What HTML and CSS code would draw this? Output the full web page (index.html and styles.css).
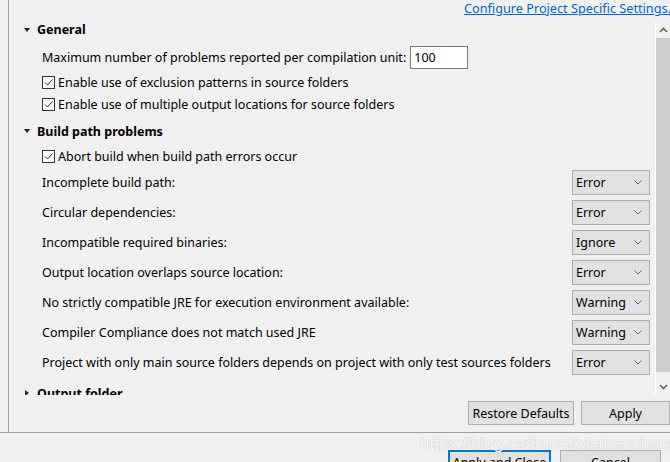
FILE: index.html
```html
<!DOCTYPE html>
<html>
<head>
<meta charset="utf-8">
<link rel="stylesheet" href="styles.css">
</head>
<body>
<div class="frame">
  <div class="panel">
    <div class="linkbar"><a class="link" href="#">Configure Project Specific Settings...</a></div>
    <div class="scrollwrap">
      <div class="content">
        <div class="section-head"><span class="tri down"></span><span>General</span></div>
        <div class="row row-max">
          <span>Maximum number of problems reported per compilation unit:</span>
          <span class="textbox">100</span>
        </div>
        <div class="row row-check first-check"><span class="checkbox"><svg viewBox="0 0 13 13" width="13" height="13"><path d="M3 6.5 L5.5 9 L10.5 3.5" fill="none" stroke="#222" stroke-width="1"/></svg></span><span>Enable use of exclusion patterns in source folders</span></div>
        <div class="row row-check second-check"><span class="checkbox"><svg viewBox="0 0 13 13" width="13" height="13"><path d="M3 6.5 L5.5 9 L10.5 3.5" fill="none" stroke="#222" stroke-width="1"/></svg></span><span>Enable use of multiple output locations for source folders</span></div>
        <div class="section-head build-head"><span class="tri down"></span><span>Build path problems</span></div>
        <div class="row row-check abort-check"><span class="checkbox"><svg viewBox="0 0 13 13" width="13" height="13"><path d="M3 6.5 L5.5 9 L10.5 3.5" fill="none" stroke="#222" stroke-width="1"/></svg></span><span>Abort build when build path errors occur</span></div>
        <div class="select-rows">
          <div class="row row-select"><span class="label">Incomplete build path:</span><span class="select"><span>Error</span><svg class="chev" viewBox="0 0 8 5" width="8" height="5"><path d="M0.5 0.5 L4 4 L7.5 0.5" fill="none" stroke="#666" stroke-width="1"/></svg></span></div>
          <div class="row row-select"><span class="label">Circular dependencies:</span><span class="select"><span>Error</span><svg class="chev" viewBox="0 0 8 5" width="8" height="5"><path d="M0.5 0.5 L4 4 L7.5 0.5" fill="none" stroke="#666" stroke-width="1"/></svg></span></div>
          <div class="row row-select"><span class="label">Incompatible required binaries:</span><span class="select"><span>Ignore</span><svg class="chev" viewBox="0 0 8 5" width="8" height="5"><path d="M0.5 0.5 L4 4 L7.5 0.5" fill="none" stroke="#666" stroke-width="1"/></svg></span></div>
          <div class="row row-select"><span class="label">Output location overlaps source location:</span><span class="select"><span>Error</span><svg class="chev" viewBox="0 0 8 5" width="8" height="5"><path d="M0.5 0.5 L4 4 L7.5 0.5" fill="none" stroke="#666" stroke-width="1"/></svg></span></div>
          <div class="row row-select"><span class="label">No strictly compatible JRE for execution environment available:</span><span class="select"><span>Warning</span><svg class="chev" viewBox="0 0 8 5" width="8" height="5"><path d="M0.5 0.5 L4 4 L7.5 0.5" fill="none" stroke="#666" stroke-width="1"/></svg></span></div>
          <div class="row row-select"><span class="label">Compiler Compliance does not match used JRE</span><span class="select"><span>Warning</span><svg class="chev" viewBox="0 0 8 5" width="8" height="5"><path d="M0.5 0.5 L4 4 L7.5 0.5" fill="none" stroke="#666" stroke-width="1"/></svg></span></div>
          <div class="row row-select"><span class="label">Project with only main source folders depends on project with only test sources folders</span><span class="select"><span>Error</span><svg class="chev" viewBox="0 0 8 5" width="8" height="5"><path d="M0.5 0.5 L4 4 L7.5 0.5" fill="none" stroke="#666" stroke-width="1"/></svg></span></div>
        </div>
        <div class="section-head output-head"><span class="tri right"></span><span>Output folder</span></div>
      </div>
      <div class="scrollbar">
        <div class="sb-btn"><svg viewBox="0 0 9 6" width="9" height="6"><path d="M1 5 L4.5 1.5 L8 5" fill="none" stroke="#606060" stroke-width="1.6"/></svg></div>
        <div class="thumb"></div>
        <div class="sb-btn"><svg viewBox="0 0 9 6" width="9" height="6"><path d="M1 1 L4.5 4.5 L8 1" fill="none" stroke="#606060" stroke-width="1.6"/></svg></div>
      </div>
    </div>
    <div class="actions">
      <button class="btn btn-restore">Restore Defaults</button>
      <button class="btn btn-apply">Apply</button>
    </div>
  </div>
</div>
<div class="footer">
  <button class="btn btn-close">Apply and Close</button>
  <button class="btn btn-cancel">Cancel</button>
</div>
<div class="watermark">https://blog.csdn.net/xiamaocheng</div>
</body>
</html>
```

FILE: styles.css
```css
html, body {
  margin: 0;
  padding: 0;
}
body {
  width: 670px;
  height: 462px;
  overflow: hidden;
  background: #f0f0f0;
  font-family: "Noto Sans", "Open Sans", sans-serif;
  font-size: 12.5px;
  color: #000;
  position: relative;
}
.frame {
  height: 432px;
  border-bottom: 1px solid #a0a0a0;
}
.panel {
  margin-left: 8px;
  border-left: 1px solid #a0a0a0;
  height: 432px;
  display: flex;
  flex-direction: column;
}
.linkbar {
  height: 22px;
  padding-left: 455px;
  white-space: nowrap;
  overflow: hidden;
  line-height: 16px;
}
.link {
  color: #0066cc;
  text-decoration: underline;
  font-size: 12.7px;
}
.scrollwrap {
  height: 373px;
  display: flex;
}
.content {
  flex: 1;
  overflow: hidden;
  padding-right: 5px;
}
.section-head {
  height: 15px;
  display: flex;
  align-items: center;
  padding-left: 14px;
  font-weight: bold;
  white-space: nowrap;
}
.build-head { margin-top: 9px; height: 16px; }
.output-head { margin-top: 10px; height: 16px; }
.tri {
  width: 14px;
  display: inline-flex;
  align-items: center;
}
.tri.down::before {
  content: "";
  border-left: 3.5px solid transparent;
  border-right: 3.5px solid transparent;
  border-top: 4px solid #222;
  margin-left: 1px;
}
.tri.right::before {
  content: "";
  border-top: 3.5px solid transparent;
  border-bottom: 3.5px solid transparent;
  border-left: 4px solid #222;
  margin-left: 2px;
}
.row {
  display: flex;
  align-items: center;
  padding-left: 33px;
  white-space: nowrap;
}
.row-max {
  margin-top: 9px;
  height: 23px;
}
.textbox {
  margin-left: 4px;
  width: 53px;
  height: 21px;
  border: 1px solid #7a7a7a;
  background: #fff;
  display: flex;
  align-items: center;
  padding-left: 3px;
}
.row-check { height: 20px; }
.first-check { margin-top: 3px; }
.second-check { margin-top: 2px; }
.abort-check { margin-top: 7px; }
.checkbox {
  width: 11px;
  height: 11px;
  border: 1px solid #333;
  background: #fff;
  margin-right: 3px;
  overflow: hidden;
}
.checkbox svg {
  display: block;
  margin: -1px 0 0 -1px;
}
.select-rows {
  margin-top: 4px;
  display: flex;
  flex-direction: column;
  gap: 5px;
}
.row-select {
  height: 25px;
}
.label {
  flex: 1;
}
.select {
  border: 1px solid #adadad;
  background: #e1e1e1;
  display: flex;
  align-items: center;
  justify-content: space-between;
  padding: 0 7px 0 3px;
  box-sizing: border-box;
  width: 78px;
  height: 25px;
}
.chev { display: block; }
.scrollbar {
  width: 14px;
  border-left: 1px solid #fff;
  display: flex;
  flex-direction: column;
  background: #f0f0f0;
}
.sb-btn {
  height: 16px;
  display: flex;
  align-items: center;
  justify-content: center;
}
.thumb {
  flex: 1;
  background: #cdcdcd;
  margin-bottom: 7px;
}
.actions {
  display: flex;
  justify-content: flex-end;
  gap: 7px;
  padding-top: 6px;
}
.btn {
  font-family: inherit;
  font-size: 12.5px;
  color: #000;
  background: #e1e1e1;
  border: 1px solid #adadad;
  height: 24px;
  padding: 0;
  margin: 0;
}
.btn-restore { width: 106px; }
.btn-apply { width: 89px; }
.footer {
  display: flex;
  justify-content: flex-end;
  gap: 9px;
  padding-top: 17px;
  padding-right: 9px;
}
.btn-close {
  width: 103px;
  border: 2px solid #0078d7;
}
.btn-cancel { width: 101px; }
.watermark {
  position: absolute;
  left: 420px;
  top: 434px;
  font-family: "Liberation Sans", sans-serif;
  font-size: 17px;
  color: rgba(255, 255, 255, 0.9);
  text-shadow: 0 0 1px rgba(140, 140, 140, 0.7);
  white-space: nowrap;
}
```
